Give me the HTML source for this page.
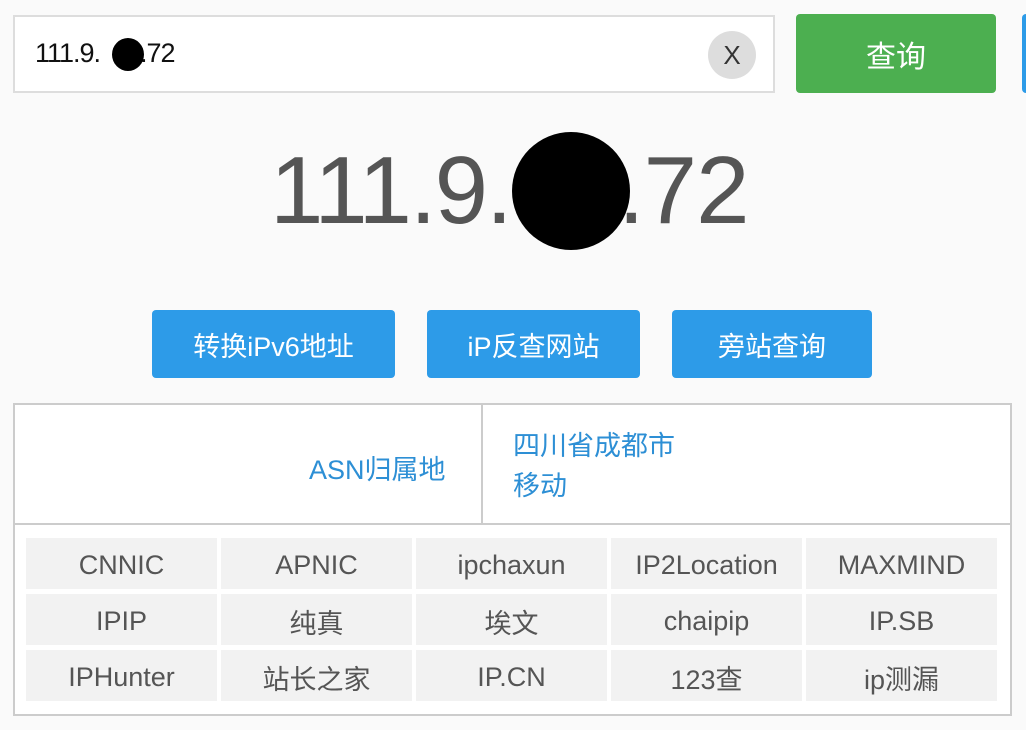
<!DOCTYPE html>
<html><head><meta charset="utf-8"><style>
body{margin:0;width:1026px;height:730px;background:#fafafa;font-family:"Liberation Sans","Noto Sans CJK SC",sans-serif;position:relative;overflow:hidden}
.a{position:absolute;white-space:nowrap}
.inp{left:13px;top:15px;width:762px;height:78px;border:2px solid #ddd;background:#fff;box-sizing:border-box}
.btn{color:#fff;font-size:27px;display:flex;align-items:center;justify-content:center;border-radius:4px}
.cell{position:absolute;width:191px;height:51px;padding-top:3px;box-sizing:border-box;background:#f2f2f2;color:#555;font-size:27px;display:flex;align-items:center;justify-content:center}
.dot{position:absolute;background:#000;border-radius:50%}
</style></head><body>
<div class="a inp"></div>
<div class="a" style="left:35px;top:38px;font-size:27px;color:#111;letter-spacing:-1px">111.9.</div>
<div class="a" style="left:140px;top:38px;font-size:27px;color:#111;letter-spacing:-1px">.72</div>
<div class="dot" style="left:112px;top:38px;width:32px;height:33px"></div>
<div class="a" style="left:708px;top:31px;width:48px;height:48px;border-radius:50%;background:#ddd;color:#333;font-size:26px;display:flex;align-items:center;justify-content:center">X</div>
<div class="a btn" style="left:796px;top:14px;width:200px;height:79px;background:#4caf50;font-size:30px">查询</div>
<div class="a" style="left:1022px;top:14px;width:6px;height:79px;background:#2d9be8;border-radius:4px 0 0 4px"></div>
<div class="a" style="left:270px;top:136px;font-size:96px;color:#555;letter-spacing:-2px">111.9.</div>
<div class="a" style="left:618px;top:136px;font-size:96px;color:#555;letter-spacing:-1px">.72</div>
<div class="dot" style="left:512px;top:132px;width:118px;height:118px"></div>
<div class="a btn" style="left:152px;top:310px;width:243px;height:68px;background:#2d9be8">转换iPv6地址</div>
<div class="a btn" style="left:427px;top:310px;width:213px;height:68px;background:#2d9be8">iP反查网站</div>
<div class="a btn" style="left:672px;top:310px;width:200px;height:68px;background:#2d9be8">旁站查询</div>
<div class="a" style="left:13px;top:403px;width:999px;height:313px;border:2px solid #ccc;box-sizing:border-box;background:#fff"></div>
<div class="a" style="left:13px;top:523px;width:999px;height:2px;background:#ccc"></div>
<div class="a" style="left:481px;top:403px;width:2px;height:121px;background:#ccc"></div>
<div class="a" style="left:309px;top:448px;font-size:27px;color:#2d8fd5">ASN归属地</div>
<div class="a" style="left:513px;top:426px;font-size:27px;color:#2d8fd5;line-height:40px">四川省成都市<br>移动</div>
<div class="cell" style="left:26px;top:538px">CNNIC</div>
<div class="cell" style="left:221px;top:538px">APNIC</div>
<div class="cell" style="left:416px;top:538px">ipchaxun</div>
<div class="cell" style="left:611px;top:538px">IP2Location</div>
<div class="cell" style="left:806px;top:538px">MAXMIND</div>
<div class="cell" style="left:26px;top:594px">IPIP</div>
<div class="cell" style="left:221px;top:594px">纯真</div>
<div class="cell" style="left:416px;top:594px">埃文</div>
<div class="cell" style="left:611px;top:594px">chaipip</div>
<div class="cell" style="left:806px;top:594px">IP.SB</div>
<div class="cell" style="left:26px;top:650px">IPHunter</div>
<div class="cell" style="left:221px;top:650px">站长之家</div>
<div class="cell" style="left:416px;top:650px">IP.CN</div>
<div class="cell" style="left:611px;top:650px">123查</div>
<div class="cell" style="left:806px;top:650px">ip测漏</div>
</body></html>
